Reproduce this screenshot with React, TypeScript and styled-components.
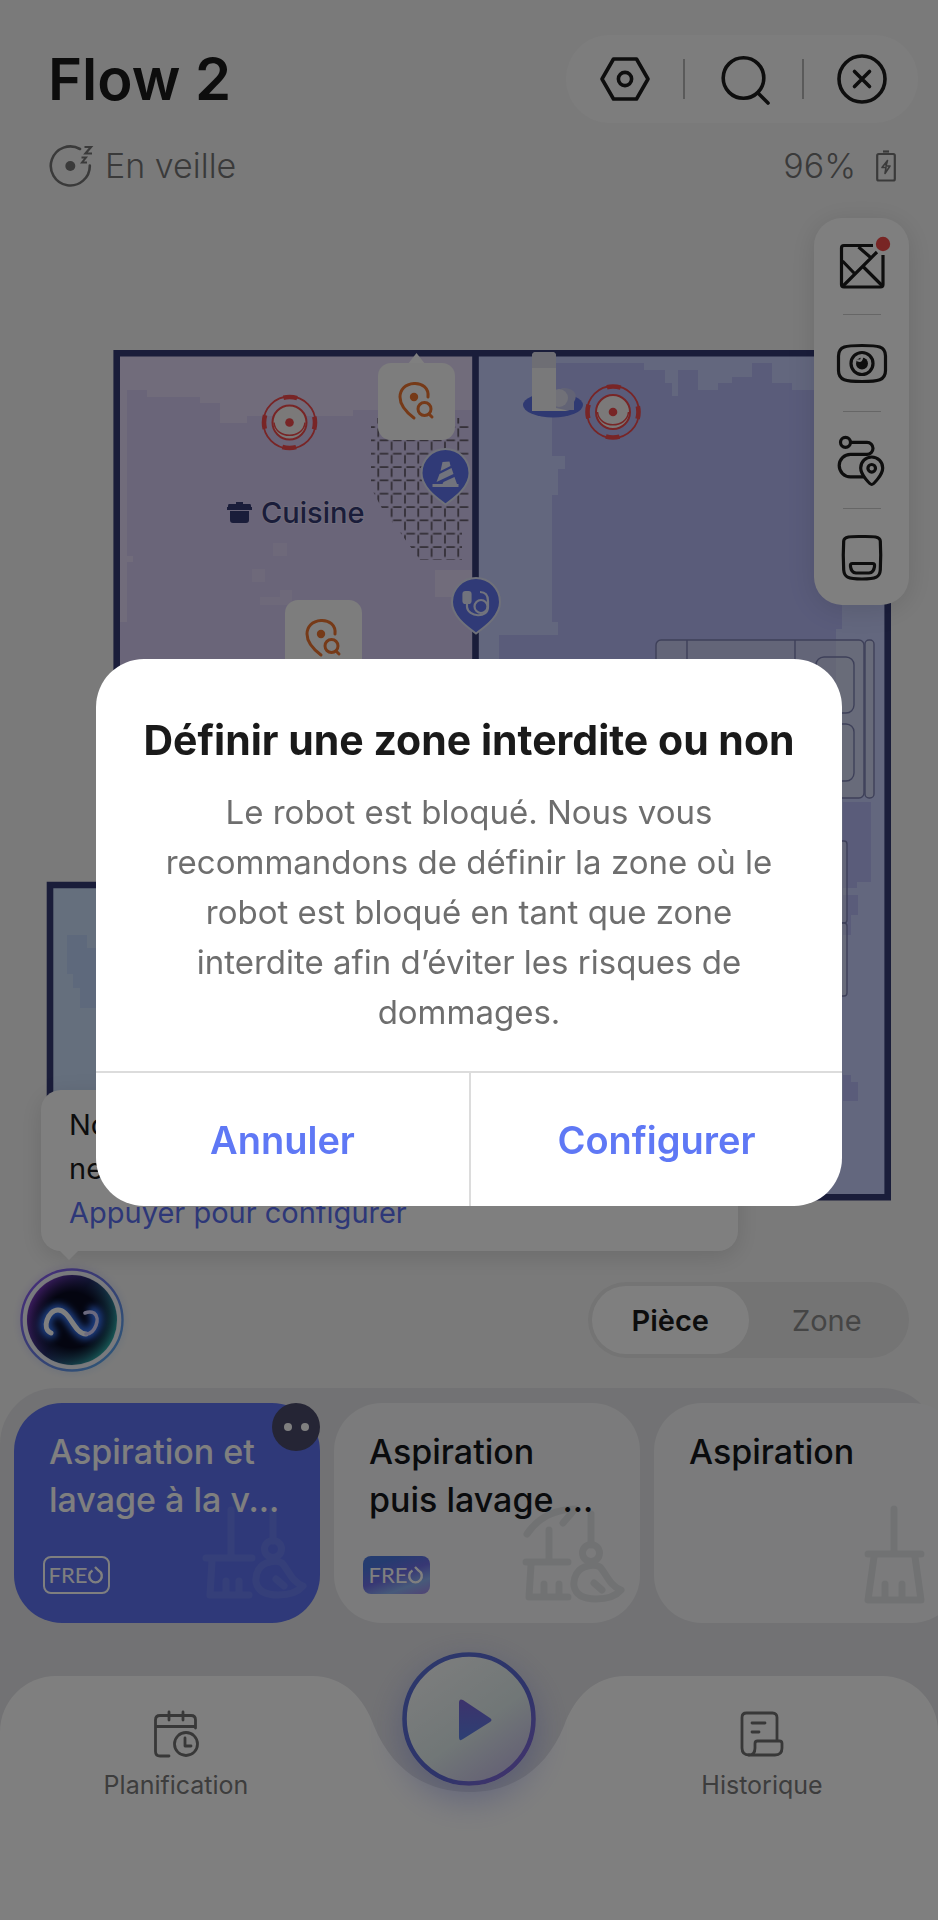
import styled, { createGlobalStyle, css } from "styled-components"

const font = `Inter, "Liberation Sans", sans-serif`

const GlobalStyle = createGlobalStyle`
  * {
    box-sizing: border-box;
  }

  body {
    margin: 0;
    background: #f5f5f5;
    font-family: ${font};
    color: #1a1a1a;
  }

  button {
    margin: 0;
    padding: 0;
    border: 0;
    background: none;
    color: inherit;
    font-family: inherit;
    cursor: pointer;
  }
`

const Screen = styled.main`
  display: flex;
  flex-direction: column;
  min-height: 100vh;
  overflow: hidden;
`

const TopBar = styled.header`
  display: flex;
  align-items: center;
  justify-content: space-between;
  padding: 35px 20px 0 48px;
`

const DeviceName = styled.h1`
  margin: 0;
  font-size: 58px;
  font-weight: 600;
  line-height: 88px;
`

const ActionPill = styled.div`
  display: flex;
  align-items: center;
  justify-content: space-between;
  width: 352px;
  height: 88px;
  padding: 0 28px 0 31px;
  border-radius: 44px;
  background: #fbfbfb;
`

const IconButton = styled.button`
  display: flex;
  width: 56px;
  height: 56px;
`

const PillDivider = styled.span`
  width: 2px;
  height: 40px;
  background: #b4b4b4;
`

const StatusRow = styled.div`
  display: flex;
  align-items: center;
  justify-content: space-between;
  padding: 19px 42px 10px 48px;
  color: #757575;
  font-size: 34px;
  font-weight: 300;
  line-height: 48px;
`

const StatusItem = styled.span<{ $gap: number }>`
  display: flex;
  align-items: center;
  gap: ${p => p.$gap}px;
`

const MapStage = styled.section`
  position: relative;
`

const MapDrawing = styled.svg`
  display: block;
  width: 100%;
  height: auto;
`

const ToolPanel = styled.div`
  position: absolute;
  top: 18px;
  right: 29px;
  display: flex;
  flex-direction: column;
  align-items: center;
  width: 95px;
  border-radius: 28px;
  background: #fff;
  box-shadow: 0 4px 28px rgba(0, 0, 0, 0.12);
`

const ToolButton = styled.button`
  display: flex;
  align-items: center;
  justify-content: center;
  width: 100%;
  height: 96px;
`

const ToolDivider = styled.span`
  width: 38px;
  height: 1px;
  background: #ccc;
`

const Tip = styled.aside`
  position: absolute;
  left: 41px;
  right: 200px;
  bottom: 9px;
  padding: 13px 28px 16px;
  border-radius: 20px;
  background: #fff;
  box-shadow: 0 6px 24px rgba(0, 0, 0, 0.12);
  font-size: 29px;
  line-height: 44px;

  &::after {
    content: "";
    position: absolute;
    left: 18px;
    bottom: -9px;
    border: solid transparent;
    border-width: 10px 10px 0;
    border-top-color: #fff;
  }

  p {
    margin: 0;
  }
`

const TipLink = styled.a`
  color: #5b6ff0;
  text-decoration: none;
`

const AssistantRow = styled.div`
  display: flex;
  align-items: center;
  justify-content: space-between;
  padding: 0 29px 8px 12px;
`

const AssistantButton = styled.button`
  display: flex;
  width: 120px;
  height: 120px;
`

const Segmented = styled.div`
  display: flex;
  width: 321px;
  height: 76px;
  padding: 4px;
  border-radius: 38px;
  background: #e8e8e8;
`

const Segment = styled.button<{ $active?: boolean }>`
  flex: 1;
  border-radius: 34px;
  color: #8a8a8a;
  font-size: 29px;

  ${p =>
    p.$active &&
    css`
      background: #fff;
      color: #1a1a1a;
      font-weight: 600;
    `}
`

const BottomSheet = styled.section`
  display: flex;
  flex: 1;
  flex-direction: column;
  border-radius: 56px 56px 0 0;
  background: #e5e5e8;
`

const ModeList = styled.div`
  display: flex;
  gap: 14px;
  padding: 15px 0 53px 14px;
  overflow: hidden;
`

const ModeCard = styled.button<{ $active?: boolean }>`
  position: relative;
  display: flex;
  flex: 0 0 306px;
  flex-direction: column;
  align-items: flex-start;
  justify-content: space-between;
  height: 220px;
  padding: 25px 16px 29px 29px;
  border-radius: 48px;
  background: ${p => (p.$active ? "#5e73f2" : "#f6f7f9")};
  color: ${p => (p.$active ? "#fff" : "#14161a")};
  text-align: left;
`

const ModeName = styled.span`
  max-width: 242px;
  padding-left: 6px;
  font-size: 34px;
  font-weight: 500;
  line-height: 48px;
`

const ModeArt = styled.svg<{ $right: number }>`
  position: absolute;
  right: ${p => p.$right}px;
  bottom: 18px;
  fill: none;
  stroke: currentColor;
  stroke-width: 7;
  stroke-linecap: round;
  stroke-linejoin: round;
  opacity: 0.08;
`

const FreoTag = styled.span<{ $colorful?: boolean }>`
  display: flex;
  align-items: center;
  justify-content: center;
  width: 67px;
  height: 38px;
  border: 2px solid #fff;
  border-radius: 8px;
  color: #fff;
  font-family: Lato, sans-serif;
  font-size: 22px;
  line-height: 22px;

  ${p =>
    p.$colorful &&
    css`
      border-color: transparent;
      background: linear-gradient(160deg, #4a78e0 20%, #6f6fe8 50%, #8fb4f4 75%, #a487ea) border-box;
    `}
`

const FaceBadge = styled.span`
  position: absolute;
  top: 0;
  right: 0;
  display: flex;
  align-items: center;
  justify-content: center;
  gap: 9px;
  width: 48px;
  height: 48px;
  border-radius: 24px;
  background: #4a4a6a;

  i {
    width: 8px;
    height: 8px;
    border-radius: 4px;
    background: #fff;
  }
`

const NavBar = styled.nav`
  position: relative;
  display: flex;
  flex: 1;
  align-items: flex-start;
  justify-content: space-between;
  min-height: 244px;
  padding: 0 96px;
`

const NavBackdrop = styled.div`
  position: absolute;
  inset: 0;
  display: flex;

  svg {
    flex: none;
  }
`

const NavShoulder = styled.div<{ $side: "left" | "right" }>`
  flex: 1;
  background: #fff;
  border-radius: ${p => (p.$side === "left" ? "56px 0 0 0" : "0 56px 0 0")};
`

const NavNotch = styled.div`
  display: flex;
  flex-direction: column;
  width: 314px;

  &::after {
    content: "";
    flex: 1;
    background: #fff;
  }
`

const NavItem = styled.button`
  position: relative;
  display: flex;
  flex-direction: column;
  align-items: center;
  gap: 11px;
  width: 160px;
  padding-top: 34px;
  color: #7a7a7a;
  font-size: 25px;
  line-height: 32px;
`

const PlayButton = styled.button`
  position: relative;
  display: flex;
  width: 134px;
  height: 134px;
  margin-top: -24px;
  border-radius: 67px;
  box-shadow: 0 12px 36px rgba(94, 110, 230, 0.4);
`

const Overlay = styled.div`
  position: fixed;
  inset: 0;
  display: flex;
  align-items: center;
  justify-content: center;
  padding: 0 96px 55px;
  background: rgba(0, 0, 0, 0.5);
`

const Dialog = styled.div`
  width: 100%;
  border-radius: 48px;
  background: #fff;
  overflow: hidden;
  text-align: center;
`

const DialogTitle = styled.h2`
  margin: 0;
  padding: 55px 24px 21px;
  font-size: 41px;
  font-weight: 700;
  line-height: 52px;
`

const DialogText = styled.p`
  margin: 0;
  padding: 0 60px 34px;
  color: #6e6e6e;
  font-size: 33px;
  line-height: 50px;
`

const DialogActions = styled.div`
  display: grid;
  grid-template-columns: 1fr 1fr;
  border-top: 2px solid #dcdcdc;
`

const DialogButton = styled.button`
  height: 133px;
  color: #5f78f5;
  font-size: 38px;
  font-weight: 600;

  & + & {
    border-left: 2px solid #dcdcdc;
  }
`

const iconStroke = {
  fill: "none",
  stroke: "#1c1c1c",
  strokeWidth: 3.6,
  strokeLinecap: "round",
  strokeLinejoin: "round"
} as const

const SettingsIcon = () => (
  <svg width="56" height="56" viewBox="0 0 56 56" {...iconStroke}>
    <path d="M5 28 16.5 8h23L51 28 39.5 48h-23Z" />
    <circle cx="28" cy="28" r="6.6" />
  </svg>
)

const SearchIcon = () => (
  <svg width="56" height="56" viewBox="0 0 56 56" {...iconStroke}>
    <circle cx="27.5" cy="27" r="20.3" />
    <path d="m42 42 10 10" />
  </svg>
)

const CloseIcon = () => (
  <svg width="56" height="56" viewBox="0 0 56 56" {...iconStroke}>
    <circle cx="28" cy="28" r="23" />
    <path d="m20.5 20.5 15 15m0-15-15 15" />
  </svg>
)

const SleepIcon = () => (
  <svg width="50" height="48" viewBox="0 0 50 48" fill="none" stroke="#757575" strokeWidth="2.6">
    <path d="M32 7A19.5 19.5 0 1 0 41.8 23.500" strokeLinecap="round" />
    <circle cx="22.3" cy="24" r="5" fill="#757575" stroke="none" />
    <path d="M36.500 5h6.500L37.500 11.500h6.500" strokeWidth="2.200" />
    <path d="M33.500 15.500h4.500l-4 5h5" strokeWidth="2" />
  </svg>
)

const BatteryIcon = () => (
  <svg width="20" height="32" viewBox="0 0 20 32" fill="none" stroke="#757575" strokeWidth="2.2">
    <path d="M7 1.5h6" />
    <rect x="1.2" y="4" width="17.6" height="26.5" rx="1.5" />
    <path d="m11.500 10.500-5.500 7h4l-1 6 5-7.500h-4Z" strokeWidth="1.600" strokeLinejoin="round" />
  </svg>
)

const MapsIcon = () => (
  <svg width="56" height="56" viewBox="0 0 56 56" overflow="visible" {...iconStroke} strokeWidth={3.2}>
    <path d="M39 7.5H10q-2.5 0-2.5 2.5v36.500q0 2.5 2.5 2.5h36.500q2.5 0 2.5-2.5V17" strokeLinecap="butt" />
    <path d="m9 48 34-34M24.5 9 36 19M8.5 23 20 35M29.5 29 48 47.5" strokeLinecap="butt" />
    <circle cx="49" cy="6" r="7.2" fill="#f04a48" stroke="none" />
  </svg>
)

const CameraIcon = () => (
  <svg width="56" height="56" viewBox="0 0 56 56" {...iconStroke} strokeWidth={3.2}>
    <path d="M28 10.500c16 0 23.5.5 23.5 10.500v14.500c0 10-7.5 11-23.5 11s-23.500-1-23.500-11V21c0-10 7.5-10.500 23.500-10.500Z" />
    <circle cx="28" cy="28.5" r="11" />
    <circle cx="28" cy="28.5" r="6" fill="#1c1c1c" stroke="none" />
    <path d="M24 25.500q4 1.500 4-4" stroke="#fff" strokeWidth="2.400" />
  </svg>
)

const RouteIcon = () => (
  <svg width="56" height="56" viewBox="0 0 56 56" {...iconStroke} strokeWidth={3.2}>
    <circle cx="11.5" cy="10.3" r="5" />
    <path d="M17.5 10.3H33a6 6 0 0 1 0 12H16.500a11.3 11.3 0 0 0 0 22.6H29" />
    <path d="M37.7 52.500c-1.5 0-11-9.500-11-16.500a11 11 0 0 1 22 0c0 7-9.500 16.500-11 16.500Z" />
    <circle cx="37.7" cy="36.3" r="3.8" />
  </svg>
)

const StationIcon = () => (
  <svg width="56" height="56" viewBox="0 0 56 56" {...iconStroke} strokeWidth={3.2}>
    <path d="M28 7.500c10 0 18-.5 18.3 4.500.5 8 .5 20 0 29-.5 7-4 9-18.300 9s-17.800-2-18.300-9c-.5-9-.5-21 0-29C10 7 18 7.500 28 7.500Z" />
    <path d="M18.500 34.500h20q2.500 0 2 3-.7 6-5.500 6.500H22q-4.800-.5-5.500-6.500-.5-3 2-3Z" />
  </svg>
)

const AssistantOrb = () => (
  <svg width="120" height="120" viewBox="0 0 120 120" fill="none">
    <defs>
      <linearGradient id="orbRing" x1="0" y1="0" x2="1" y2="1">
        <stop offset="0.1" stopColor="#8a5cf0" />
        <stop offset="0.55" stopColor="#6a86e8" />
        <stop offset="1" stopColor="#5ab4f0" />
      </linearGradient>
      <linearGradient id="orbRim" x1="0" y1="0.2" x2="1" y2="0.8">
        <stop offset="0" stopColor="#8a3ad0" />
        <stop offset="0.45" stopColor="#283070" />
        <stop offset="1" stopColor="#30c8b8" />
      </linearGradient>
      <radialGradient id="orbCore">
        <stop offset="0.6" stopColor="#080a20" />
        <stop offset="1" stopColor="#080a20" stopOpacity="0" />
      </radialGradient>
      <filter id="orbGlow" x="-50%" y="-50%" width="200%" height="200%">
        <feGaussianBlur stdDeviation="3.500" />
      </filter>
    </defs>
    <circle cx="60" cy="60" r="50" stroke="url(#orbRing)" strokeWidth="8" opacity="0.15" filter="url(#orbGlow)" />
    <circle cx="60" cy="60" r="50.5" fill="#f2f4fa" stroke="url(#orbRing)" strokeWidth="2.4" />
    <circle cx="60" cy="60" r="45" fill="url(#orbRim)" />
    <circle cx="60" cy="60" r="46" fill="url(#orbCore)" />
    <g strokeLinecap="round">
      <path
        d="M39 73C27 68 36 50 46 50c12 0 16 24 28 24 9 0 15-17 8-22"
        stroke="#3a7cff"
        strokeWidth="12"
        filter="url(#orbGlow)"
      />
      <path d="M39 73C29 69 36 50 46 50c12 0 16 24 28 24" stroke="#fff" strokeWidth="5" />
      <path d="M74 74c9 0 15-16 8-21q-4-2-9 0" stroke="#d8d4ff" strokeWidth="3.6" />
    </g>
  </svg>
)

const CalendarIcon = () => (
  <svg width="48" height="48" viewBox="0 0 48 48" {...iconStroke} stroke="#707070" strokeWidth={2.8}>
    <path d="M17 46H8q-4.500 0-4.500-4.500V10Q3.500 5.500 8 5.500h31q4.500 0 4.500 4.500v8M3.500 16.500h40M17 2v8M31 2v8" />
    <circle cx="34" cy="34" r="11.5" />
    <path d="M33 28v8h6" />
  </svg>
)

const HistoryIcon = () => (
  <svg width="48" height="48" viewBox="0 0 48 48" {...iconStroke} stroke="#707070" strokeWidth={2.8}>
    <path d="M39 30V7.500Q39 3 34.500 3H8.500Q4 3 4 7.500V38q0 7 7 7M14 13h13M14 22h7" />
    <path d="M11 45q6 0 6-7v-4.500q0-2.500 2.500-2.500h22q2.500 0 2.500 2.500V38q0 7-7 7Z" />
  </svg>
)

const PlayArt = () => (
  <svg width="134" height="134" viewBox="0 0 134 134">
    <defs>
      <linearGradient id="playRing" x1="0" y1="0" x2="1" y2="1">
        <stop offset="0" stopColor="#5a72d8" />
        <stop offset="0.6" stopColor="#5c68d4" />
        <stop offset="0.85" stopColor="#7c68d8" />
        <stop offset="1" stopColor="#5a72d8" />
      </linearGradient>
      <linearGradient id="playFace" x1="0.2" y1="0" x2="0.85" y2="0.9">
        <stop offset="0" stopColor="#fafcfc" />
        <stop offset="0.6" stopColor="#e2eeee" />
        <stop offset="0.95" stopColor="#ccc8ea" />
      </linearGradient>
      <linearGradient id="playArrow" x1="0" y1="0" x2="0" y2="1">
        <stop offset="0" stopColor="#7a66d8" />
        <stop offset="1" stopColor="#5a80e8" />
      </linearGradient>
    </defs>
    <circle cx="67" cy="67" r="64.5" fill="url(#playFace)" stroke="url(#playRing)" strokeWidth="4.6" />
    <path d="M57 51v34q0 5 4 2l27-17q3-2 0-4L61 48q-4-2-4 3Z" fill="url(#playArrow)" />
  </svg>
)

const Freo = ({ colorful }: { colorful?: boolean }) => (
  <FreoTag $colorful={colorful}>
    FRE
    <svg width="17" height="20" viewBox="0 0 17 20" fill="none" stroke="#fff" strokeWidth="2.4">
      <path d="M5.500 5.500a6.300 6.300 0 1 0 6 0L8 2" />
    </svg>
  </FreoTag>
)

const Robot = ({ x, y }: { x: number; y: number }) => (
  <g transform={`translate(${x} ${y})`} fill="none" stroke="#f04a4c">
    <circle r="26" strokeWidth="1.8" />
    <circle r="25.5" strokeWidth="4.600" strokeDasharray="14 26.060" strokeDashoffset="7" />
    <circle r="17" fill="#f6f2f2" strokeWidth="2" />
    <path d="M-15.500 0C-14 17 14 17 15.500 0" strokeWidth="1.5" />
    <circle r="4.3" fill="#f04a4c" stroke="none" />
  </g>
)

const SpotCard = ({ x, y, pointer }: { x: number; y: number; pointer?: boolean }) => (
  <g transform={`translate(${x} ${y})`}>
    {pointer && <path d="M30 1 38.500-10 47 1Z" fill="#fff" />}
    <rect width="77" height="77" rx="13" fill="#fafafa" />
    <g fill="none" stroke="#ec7430" strokeWidth="3" strokeLinecap="round">
      <path d="M50 34C51 25 44 20 36 20.500 27 21 22 27 22 34c0 8 6 15 14 21" />
      <circle cx="46.5" cy="46" r="6.5" />
      <path d="m51 51 3 3" />
      <circle cx="36" cy="34" r="4.2" fill="#ec7430" stroke="none" />
    </g>
  </g>
)

const PinBody = () => (
  <path
    d="M0 30.500C-7 25-24 14-24-1a24 24 0 0 1 48 0C24 14 7 25 0 30.500Z"
    fill="#6074ee"
    stroke="#dfe2f4"
    strokeWidth="2"
  />
)

const FloorPlan = () => (
  <MapDrawing viewBox="0 200 938 1060" role="img" aria-label="Carte du logement">
    <defs>
      <pattern id="grille" x="377.3" y="426" width="13.33" height="13.33" patternUnits="userSpaceOnUse">
        <path d="M2.400 1h8.600M1 2.400v8.600" stroke="#625a68" strokeWidth="1.7" />
      </pattern>
    </defs>

    <path d="M116 353h359v540H116Z" fill="#e3d9f7" />
    <path
      d="M127 390h20v7h53v6h20v20h27v-7h106v-6h122v160h-40v27h40v296H120V622h7v-60h6v-6h-6Z"
      fill="#d5caf2"
    />
    <path d="M273 543h14v13h-14zM252 569h13v13h-13zM280 590h12v15h-12zM260 597h20v8h-20z" fill="#ddd2f5" />

    <path d="M475 353h413v845H475Z" fill="#c6cefc" />
    <path
      d="M556 363h88v7h21v13h7v13h6v-26h20v20h20v-7h14v-6h20v-14h20v20h20v7h57v212h-7v27h-6v243H499V635h59v-13h-6V495h6v-26h7v-13h-13v-86h4Z"
      fill="#b4b8f5"
    />
    <path d="M843 802h28v80h-14v6h-14zM843 895h15v20h-7v20h-8zM843 1075h8v7h7v19h-15z" fill="#b4b8f5" />

    <path d="M50 885h80v260H50Z" fill="#cadefa" />
    <path d="M67 935h20v13h15v60H80v-20h-7v-14h-6z" fill="#bcd2f8" />

    <g fill="#dce0ea" fillOpacity="0.45" stroke="#7c80b2" strokeWidth="1.4">
      <rect x="656" y="640" width="208" height="158" rx="5" />
      <rect x="865" y="640" width="9" height="158" rx="4" />
      <rect x="816" y="657" width="38" height="56" rx="8" fillOpacity="0.2" />
      <rect x="816" y="724" width="38" height="57" rx="8" fillOpacity="0.2" />
      <path d="M687 640v20M795 640v20" />
      <rect x="800" y="841" width="47" height="82" rx="3" />
      <rect x="800" y="923" width="47" height="73" rx="3" />
    </g>

    <g fill="none" stroke="#343a74" strokeWidth="6.6">
      <path d="M50 1140V885h120M116.700 900V353.300h771v844H475.500V353.300" />
    </g>

    <path d="M371 418h98v104l-7 10v28h-42l-26-36-10-12-13-24Z" fill="url(#grille)" />

    <ellipse cx="553" cy="405" rx="30" ry="12.5" fill="#5f72e4" />
    <path d="M562 388c14 0 16 8 12 14v8h-22v-14Z" fill="#c4c6ea" />
    <ellipse cx="559" cy="398" rx="9" ry="9" fill="#e2e2f0" />
    <path d="M532 356q0-4 4-4h16q4 0 4 4v52l14 3h-38Z" fill="#f2f2f4" />
    <path d="M532 356q0-4 4-4h16q4 0 4 4v12h-24Z" fill="#dcdce8" />

    <Robot x={289.5} y={422.5} />
    <Robot x={613} y={412} />
    <SpotCard x={378} y={363} pointer />
    <SpotCard x={285} y={600} />

    <g transform="translate(445.5 474)">
      <PinBody />
      <path
        d="M-3-12 4-12.500 5-8-5-3Zm-3 12L6-6l2 6L-9 8Zm4 8 11-5 2.500 7H13v3h-26v-3h10Z"
        fill="#e2e6fa"
      />
    </g>
    <g transform="translate(476 603)" fill="none" stroke="#e2e6fa" strokeWidth="2.2">
      <PinBody />
      <rect x="-12.5" y="-11" width="7" height="11" rx="2" fill="#e2e6fa" />
      <path d="M-9 0v4C-8 14 12 16 12 4V-2Q12-11 4-11" />
      <circle cx="5" cy="3.5" r="6.5" />
    </g>

    <g fill="#343a74">
      <path d="M236 502h7v2h7q1 0 1 2v1h1v3h-25v-3h1v-1q0-2 1-2h7ZM230 511h19v9q0 3-3 3h-13q-3 0-3-3Z" />
      <text
        x="261"
        y="523"
        fontFamily={font}
        fontSize="29"
        fontWeight="500"
        stroke="#e3d9f7"
        strokeWidth="2"
        paintOrder="stroke"
      >
        Cuisine
      </text>
    </g>
  </MapDrawing>
)

const Mop = ({ x, y }: { x: number; y: number }) => (
  <g transform={`translate(${x} ${y})`}>
    <path d="M0-39v31" />
    <circle r="8.5" />
    <path d="M-3 13c-11 2-15 12-14 20 2 10 12 13 22 13 12 0 20-3 25-9C19 33 16 22 9 14q-5-3-12-1Z" />
    <path d="m3 30 8 7" />
  </g>
)

const tools = [
  { label: "Cartes", icon: <MapsIcon /> },
  { label: "Caméra", icon: <CameraIcon /> },
  { label: "Trajet", icon: <RouteIcon /> },
  { label: "Station", icon: <StationIcon /> }
]

export default function App() {
  return (
    <>
      <GlobalStyle />
      <Screen>
        <TopBar>
          <DeviceName>Flow 2</DeviceName>
          <ActionPill>
            <IconButton aria-label="Réglages">
              <SettingsIcon />
            </IconButton>
            <PillDivider />
            <IconButton aria-label="Rechercher">
              <SearchIcon />
            </IconButton>
            <PillDivider />
            <IconButton aria-label="Fermer">
              <CloseIcon />
            </IconButton>
          </ActionPill>
        </TopBar>

        <StatusRow>
          <StatusItem $gap={7}>
            <SleepIcon />
            En veille
          </StatusItem>
          <StatusItem $gap={20}>
            96%
            <BatteryIcon />
          </StatusItem>
        </StatusRow>

        <MapStage>
          <FloorPlan />
          <ToolPanel>
            {tools.map((tool, i) => [
              i > 0 && <ToolDivider key={`${tool.label}-divider`} />,
              <ToolButton key={tool.label} aria-label={tool.label}>
                {tool.icon}
              </ToolButton>
            ])}
          </ToolPanel>
          <Tip>
            <p>Nous avons repéré un endroit où</p>
            <p>nettoyer est risqué.</p>
            <TipLink href="#configurer">Appuyer pour configurer</TipLink>
          </Tip>
        </MapStage>

        <AssistantRow>
          <AssistantButton aria-label="Assistant">
            <AssistantOrb />
          </AssistantButton>
          <Segmented>
            <Segment $active aria-pressed="true">
              Pièce
            </Segment>
            <Segment aria-pressed="false">Zone</Segment>
          </Segmented>
        </AssistantRow>

        <BottomSheet>
          <ModeList>
            <ModeCard $active>
              <ModeArt $right={10} width="110" height="100" viewBox="200 1505 110 100">
                <path d="M231 1510v46M206 1558h46M212 1561l-2 34h39M226 1581v13M239 1581v13" />
                <Mop x={273} y={1549} />
              </ModeArt>
              <ModeName>Aspiration et lavage à la v...</ModeName>
              <Freo />
              <FaceBadge>
                <i />
                <i />
              </FaceBadge>
            </ModeCard>
            <ModeCard>
              <ModeArt $right={10} width="110" height="100" viewBox="520 1505 110 100">
                <path d="M527 1534q16-24 48-25l-12 14" />
                <path d="M549 1530v28M526 1562h42M531 1565l-2 32h39M544 1584v13M559 1584v13" />
                <Mop x={591} y={1553} />
              </ModeArt>
              <ModeName>Aspiration puis lavage ...</ModeName>
              <Freo colorful />
            </ModeCard>
            <ModeCard>
              <ModeArt $right={30} width="70" height="105" viewBox="860 1500 70 105">
                <path d="M894 1509v42M868 1554h53M874 1557l-6 43h53l-6-43M885 1584v14M902 1584v14" />
              </ModeArt>
              <ModeName>Aspiration</ModeName>
            </ModeCard>
          </ModeList>

          <NavBar>
            <NavBackdrop>
              <NavShoulder $side="left" />
              <NavNotch>
                <svg width="314" height="120" viewBox="0 0 314 120" fill="#fff">
                  <path d="M0 0c32 0 52 22 62 50 18 44 52 66 95 66s77-22 95-66C262 22 282 0 314 0v120H0Z" />
                </svg>
              </NavNotch>
              <NavShoulder $side="right" />
            </NavBackdrop>
            <NavItem>
              <CalendarIcon />
              Planification
            </NavItem>
            <PlayButton aria-label="Démarrer">
              <PlayArt />
            </PlayButton>
            <NavItem>
              <HistoryIcon />
              Historique
            </NavItem>
          </NavBar>
        </BottomSheet>
      </Screen>

      <Overlay>
        <Dialog role="dialog" aria-modal="true" aria-labelledby="dialog-title">
          <DialogTitle id="dialog-title">Définir une zone interdite ou non</DialogTitle>
          <DialogText>
            Le robot est bloqué. Nous vous recommandons de définir la zone où le robot est bloqué en
            tant que zone interdite afin d’éviter les risques de dommages.
          </DialogText>
          <DialogActions>
            <DialogButton>Annuler</DialogButton>
            <DialogButton>Configurer</DialogButton>
          </DialogActions>
        </Dialog>
      </Overlay>
    </>
  )
}
